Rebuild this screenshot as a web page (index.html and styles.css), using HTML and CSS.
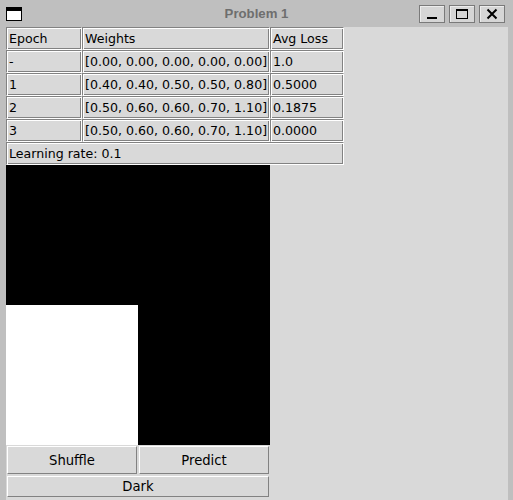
FILE: index.html
```html
<!DOCTYPE html>
<html>
<head>
<meta charset="utf-8">
<title>Problem 1</title>
<link rel="stylesheet" href="styles.css">
</head>
<body>
<div class="window">
  <div class="titlebar">
    <svg class="app-icon" width="16" height="14" viewBox="0 0 16 14">
      <rect x="0.5" y="0.5" width="15" height="13" fill="#fff" stroke="#000"/>
      <rect x="0" y="0" width="16" height="4" fill="#000"/>
    </svg>
    <div class="title">Problem 1</div>
    <div class="wm-buttons">
      <div class="wm-btn">
        <svg width="26" height="18" viewBox="0 0 26 18"><rect x="8" y="12" width="10" height="2" fill="#000"/></svg>
      </div>
      <div class="wm-btn">
        <svg width="26" height="18" viewBox="0 0 26 18"><rect x="7.5" y="4.5" width="11" height="9" fill="none" stroke="#000"/><rect x="7" y="4" width="12" height="2" fill="#000"/></svg>
      </div>
      <div class="wm-btn">
        <svg width="26" height="18" viewBox="0 0 26 18"><path d="M8.5 4.5 L17.5 13.5 M17.5 4.5 L8.5 13.5" stroke="#000" stroke-width="2"/></svg>
      </div>
    </div>
  </div>
  <div class="client">
    <div class="app">
      <div class="cell">Epoch</div>
      <div class="cell">Weights</div>
      <div class="cell">Avg Loss</div>
      <div class="cell">-</div>
      <div class="cell">[0.00, 0.00, 0.00, 0.00, 0.00]</div>
      <div class="cell">1.0</div>
      <div class="cell">1</div>
      <div class="cell">[0.40, 0.40, 0.50, 0.50, 0.80]</div>
      <div class="cell">0.5000</div>
      <div class="cell">2</div>
      <div class="cell">[0.50, 0.60, 0.60, 0.70, 1.10]</div>
      <div class="cell">0.1875</div>
      <div class="cell">3</div>
      <div class="cell">[0.50, 0.60, 0.60, 0.70, 1.10]</div>
      <div class="cell">0.0000</div>
      <div class="cell span3">Learning rate: 0.1</div>
      <div class="canvas">
        <div class="q black"></div>
        <div class="q black"></div>
        <div class="q white"></div>
        <div class="q black"></div>
      </div>
      <div class="btn-row">
        <button class="btn tall">Shuffle</button>
        <button class="btn tall">Predict</button>
        <button class="btn wide">Dark</button>
      </div>
    </div>
  </div>
</div>
</body>
</html>
```
FILE: styles.css
```css
html, body {
  margin: 0;
  padding: 0;
}
body {
  background: #bfbfbf;
  font-family: "DejaVu Sans", sans-serif;
}
.window {
  width: 513px;
  height: 500px;
  display: flex;
  flex-direction: column;
  overflow: hidden;
}
.titlebar {
  height: 27px;
  flex: none;
  position: relative;
  display: flex;
  align-items: flex-start;
}
.app-icon {
  margin: 7px 0 0 6px;
  display: block;
}
.title {
  position: absolute;
  left: 0;
  right: 0;
  top: 6px;
  text-align: center;
  font-family: "Liberation Sans", Arial, sans-serif;
  font-weight: bold;
  font-size: 13.2px;
  line-height: 15px;
  color: #6e6e6e;
}
.wm-buttons {
  margin: 5px 0 0 auto;
  padding-right: 8px;
  display: flex;
  gap: 4px;
}
.wm-btn {
  width: 24px;
  height: 16px;
  border: 1px solid #7a7a7a;
  background: #d6d6d6;
  box-shadow: inset 1px 1px #ececec;
  position: relative;
}
.wm-btn svg {
  position: absolute;
  left: -1px;
  top: -1px;
  display: block;
}
.client {
  flex: 1;
  margin: 0 5px 0 6px;
  background: #d9d9d9;
}
.app {
  display: grid;
  grid-template-columns: 76px 188px 74px;
  grid-template-rows: repeat(6, 23px) 280px auto;
  width: 338px;
}
.cell {
  box-sizing: border-box;
  border: 1px solid;
  border-color: #828282 #ffffff #ffffff #828282;
  box-shadow: inset 1px 1px #ffffff, inset -1px -1px #828282;
  padding: 0 0 0 2px;
  font-size: 12.6px;
  line-height: 21px;
  color: #000;
  white-space: nowrap;
  overflow: hidden;
}
.span3 {
  grid-column: 1 / 4;
}
.canvas {
  grid-column: 1 / 3;
  background: #000;
  display: grid;
  grid-template-columns: 132px 132px;
  grid-template-rows: 140px 140px;
}
.q.black { background: #000; }
.q.white { background: #fff; }
.btn-row {
  grid-column: 1 / 3;
  display: grid;
  grid-template-columns: 132px 132px;
  grid-template-rows: 30px 23px;
}
.btn {
  box-sizing: border-box;
  margin: 1px;
  border: 1px solid;
  border-color: #ffffff #828282 #828282 #ffffff;
  background: #d9d9d9;
  font-family: "DejaVu Sans", sans-serif;
  font-size: 13.2px;
  color: #000;
  padding: 0;
  text-align: center;
}
.btn.wide {
  grid-column: 1 / 3;
}
```
